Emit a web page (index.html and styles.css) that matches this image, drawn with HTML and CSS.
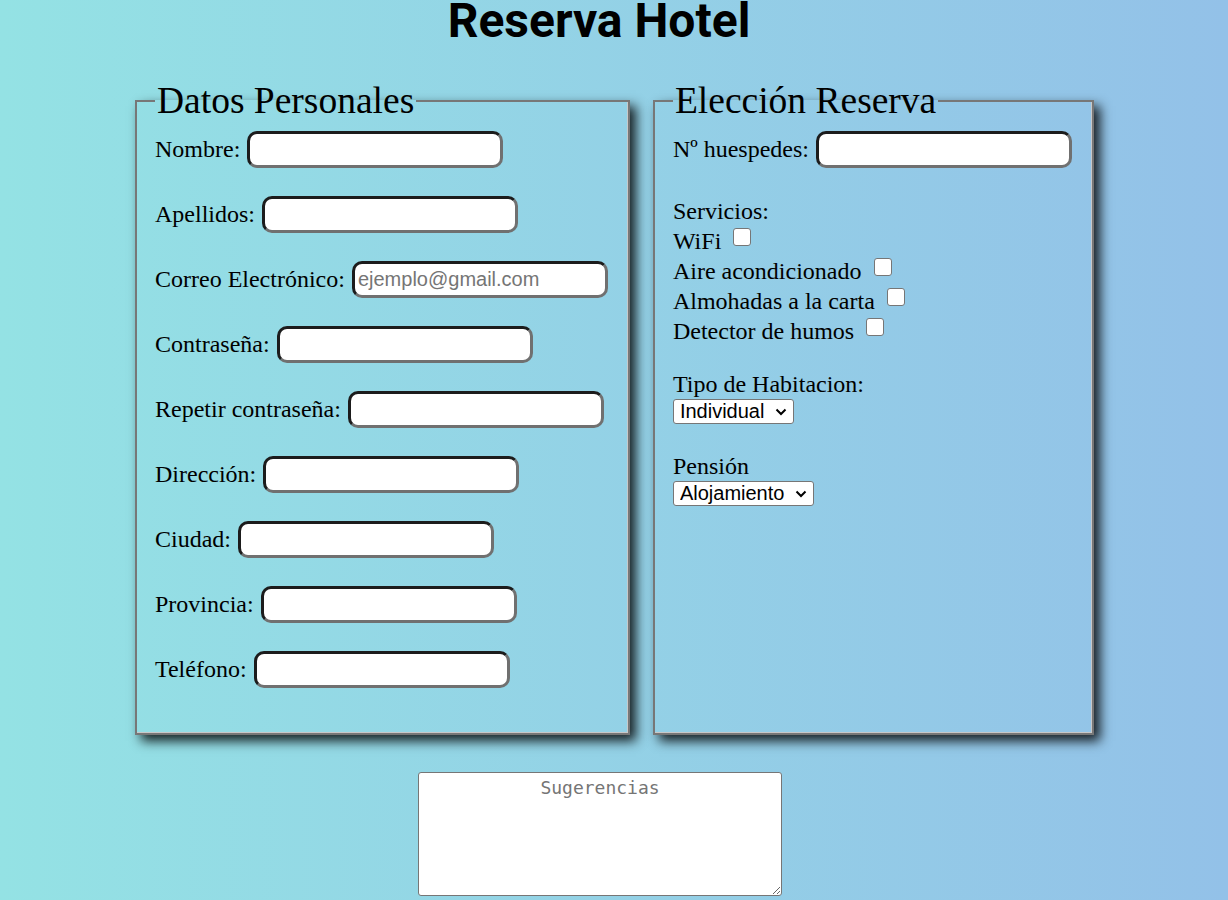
FILE: index.html
```
<!DOCTYPE html>
<html lang="es">
<head>
<meta charset="utf-8">
<title>Reserva Hotel</title>
<link rel="stylesheet" href="styles.css">
</head>
<body>
<h1 class="title">Reserva Hotel</h1>
<form class="form">
  <div class="panels">
    <fieldset class="panel panel-personal">
      <legend class="panel-legend">Datos Personales</legend>
      <div class="row"><label>Nombre:</label><input class="field" type="text"></div>
      <div class="row"><label>Apellidos:</label><input class="field" type="text"></div>
      <div class="row"><label>Correo Electrónico:</label><input class="field" type="email" placeholder="ejemplo@gmail.com"></div>
      <div class="row"><label>Contraseña:</label><input class="field" type="password"></div>
      <div class="row"><label>Repetir contraseña:</label><input class="field" type="password"></div>
      <div class="row"><label>Dirección:</label><input class="field" type="text"></div>
      <div class="row"><label>Ciudad:</label><input class="field" type="text"></div>
      <div class="row"><label>Provincia:</label><input class="field" type="text"></div>
      <div class="row"><label>Teléfono:</label><input class="field" type="tel"></div>
    </fieldset>
    <fieldset class="panel panel-booking">
      <legend class="panel-legend">Elección Reserva</legend>
      <div class="row"><label>Nº huespedes:</label><input class="field" type="number"></div>
      <div class="services">
        <div class="line">Servicios:</div>
        <div class="line">WiFi <input class="check" type="checkbox"></div>
        <div class="line">Aire acondicionado <input class="check" type="checkbox"></div>
        <div class="line">Almohadas a la carta <input class="check" type="checkbox"></div>
        <div class="line">Detector de humos <input class="check" type="checkbox"></div>
      </div>
      <div class="choice choice-room">
        <div class="line">Tipo de Habitacion:</div>
        <span class="select-wrap">
          <select class="dropdown dropdown-room">
            <option>Individual</option>
            <option>Doble</option>
            <option>Triple</option>
          </select>
          <svg class="chevron" width="12" height="8" viewBox="0 0 12 8" aria-hidden="true"><path d="M1.5 1.5 L6 6 L10.5 1.5" fill="none" stroke="#000" stroke-width="2"/></svg>
        </span>
      </div>
      <div class="choice choice-board">
        <div class="line">Pensión</div>
        <span class="select-wrap">
          <select class="dropdown dropdown-board">
            <option>Alojamiento</option>
            <option>Desayuno</option>
            <option>Completa</option>
          </select>
          <svg class="chevron" width="12" height="8" viewBox="0 0 12 8" aria-hidden="true"><path d="M1.5 1.5 L6 6 L10.5 1.5" fill="none" stroke="#000" stroke-width="2"/></svg>
        </span>
      </div>
    </fieldset>
  </div>
  <div class="notes">
    <textarea class="notes-box" placeholder="Sugerencias"></textarea>
  </div>
</form>
</body>
</html>
```
FILE: styles.css
```
html {
  background: linear-gradient(to right, rgb(148, 226, 228), rgb(147, 193, 232));
  min-height: 100%;
}
body {
  margin: 0;
  min-height: 100vh;
}
.title {
  margin: 0;
  padding-right: 30px;
  font-family: Roboto, "Liberation Sans", sans-serif;
  font-weight: 700;
  font-size: 48px;
  line-height: 42px;
  text-align: center;
  color: #000;
}
.form {
  margin: 0;
}
.panels {
  display: flex;
  justify-content: center;
  gap: 23px;
  margin-top: 37px;
  padding-left: 1px;
}
.panel {
  flex: none;
  margin: 0;
  font-family: "Liberation Serif", "Times New Roman", serif;
  font-size: 24px;
  padding: 8.5px 20px 17px 18px;
  border: 2px solid #777;
  box-shadow: inset -1px -1px 0 #c8c8c8, 6px 6px 11px rgba(0, 0, 0, 0.85);
}
.panel-legend {
  font-size: 37.5px;
  padding: 0 2px;
}
.row {
  display: flex;
  align-items: center;
  gap: 7px;
  height: 37px;
  margin-bottom: 28px;
  white-space: nowrap;
}
.field {
  box-sizing: border-box;
  width: 256px;
  height: 37px;
  padding: 1px 3px;
  font-family: "Liberation Sans", Arial, sans-serif;
  font-size: 20px;
  background: #fff;
  border: 3px solid;
  border-color: #1c1c1c #707070 #707070 #1c1c1c;
  border-radius: 10px;
  outline: none;
}
.field::placeholder {
  color: #757575;
}
.line {
  line-height: 30px;
  white-space: nowrap;
}
.check {
  appearance: none;
  -webkit-appearance: none;
  display: inline-block;
  box-sizing: border-box;
  width: 18px;
  height: 18px;
  margin: 0 3px 3px 6px;
  vertical-align: baseline;
  background: #fff;
  border: 1px solid #767676;
  border-radius: 3px;
}
.choice-room {
  margin-top: 23px;
}
.choice-board {
  margin-top: 25px;
}
.select-wrap {
  position: relative;
  display: inline-block;
  vertical-align: top;
}
.dropdown {
  appearance: none;
  -webkit-appearance: none;
  display: block;
  box-sizing: border-box;
  height: 25px;
  margin: 0;
  padding: 0 24px 0 6px;
  font-family: "Liberation Sans", Arial, sans-serif;
  font-size: 20px;
  line-height: 23px;
  color: #000;
  background: #fff;
  border: 1px solid #767676;
  border-radius: 3px;
}
.dropdown-room {
  width: 121px;
}
.dropdown-board {
  width: 141px;
}
.chevron {
  position: absolute;
  right: 7px;
  top: 9px;
  pointer-events: none;
}
.notes {
  display: flex;
  justify-content: center;
  padding-right: 28px;
  margin-top: 37px;
}
.notes-box {
  box-sizing: border-box;
  width: 364px;
  height: 124px;
  margin: 0;
  padding: 4px 2px 2px;
  font-family: "DejaVu Sans Mono", "Liberation Mono", monospace;
  font-size: 18px;
  text-align: center;
  background: #fff;
  border: 1px solid #767676;
  border-radius: 3px;
}
.notes-box::placeholder {
  color: #757575;
}
```
